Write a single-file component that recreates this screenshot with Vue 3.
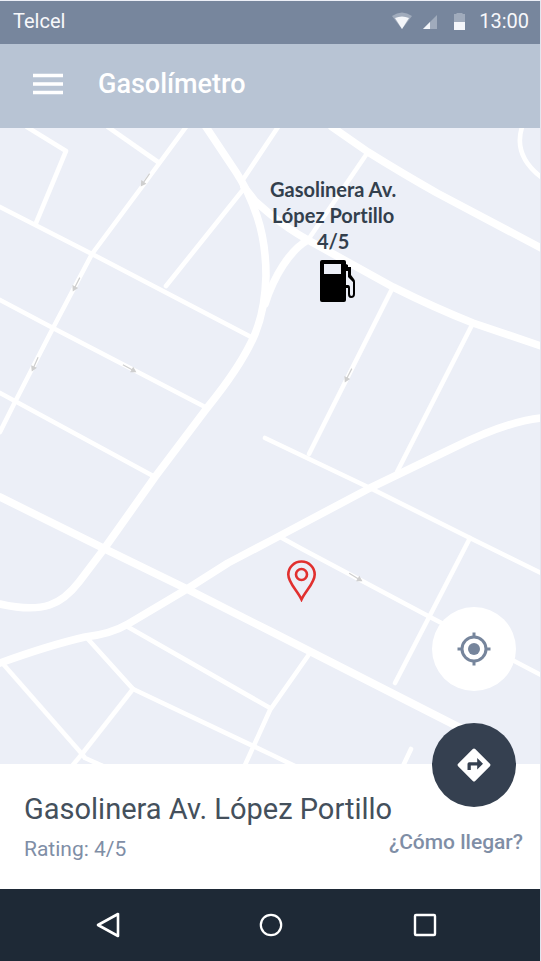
<script setup>
import { ref } from 'vue'

const station = ref({ name: 'Gasolinera Av. López Portillo', rating: '4/5' })

const avenues = [
  'M206 127L236 172Q248 190 257 216Q266 243 266 276Q265 310 255 334Q242 365 207 408L155 477L104 549L79 582C62 604 44 614 0 604',
  'M244 187L255 201L270 214Q288 229 308 240L393 287Q435 308 473 323L541 346',
  'M332 127L368 152Q400 172 437 193L541 248',
  'M308 240C290 250 274 276 265 304',
  'M541 418Q508 421 453 448L370 488L270 541L228 563L187 589L128 624Q111 634 85 637Q50 645 0 663',
  'M0 497L105 549L187 589L270 631L490 743',
]

const streets = [
  'M27 127L66 151L36 223',
  'M108 127L158 162',
  'M186 127L144 184L92 254L53 328L15 402L0 432',
  'M0 207L92 254L253 338',
  'M166 286L242 191M242 181L278 127',
  'M368 152L310 237',
  'M522 127C516 146 523 163 541 177',
  'M393 287L309 454',
  'M473 323L397 472',
  'M265 438L370 488L470 538L541 573',
  'M0 393L155 477',
  'M0 300L53 328L207 408',
  'M282 538L302 549L430 617L541 675',
  'M470 538L395 683',
  'M128 627L270 708',
  'M310 653L270 710L245 765',
  'M87 638L133 689L270 754L295 766',
  'M133 689L82 754L72 766',
  'M4 665L82 754L85 758L103 766',
  'M411 749L403 766',
]

const directions = [
  { x: 141, y: 186, angle: 125 },
  { x: 73, y: 291, angle: 117 },
  { x: 32, y: 371, angle: 114 },
  { x: 136, y: 372, angle: 29 },
  { x: 345, y: 382, angle: 117 },
  { x: 362, y: 581, angle: 31 },
]
</script>

<template>
  <div class="screen">
    <div class="status">
      <span>Telcel</span>
      <div class="status-icons">
        <svg class="wifi" width="20" height="18" viewBox="0 0 20 18" aria-hidden="true">
          <path d="M0 4Q10-3 20 4L10 17Z" fill="#a0abbc" />
          <path d="M3 6Q10 3 17 6L10 17Z" fill="#f4f6fa" />
        </svg>
        <svg class="signal" width="14" height="18" viewBox="0 0 14 18" aria-hidden="true">
          <path d="M0 17L14 3V17Z" fill="#a0abbc" />
          <path d="M0 17L7 10V17Z" fill="#f4f6fa" />
        </svg>
        <svg class="battery" width="11" height="18" viewBox="0 0 11 18" aria-hidden="true">
          <path d="M0 2H2L3 1H8L9 2H11V10H0Z" fill="#a0abbc" />
          <path d="M0 10H11V18H0Z" fill="#f4f6fa" />
        </svg>
        <span>13:00</span>
      </div>
    </div>

    <header class="appbar">
      <button class="menu" type="button" aria-label="Menú">
        <svg width="30" height="22" viewBox="0 0 30 22" aria-hidden="true">
          <path d="M0 2.5H30M0 11H30M0 19.5H30" stroke="#fff" stroke-width="3.6" />
        </svg>
      </button>
      <h1>Gasolímetro</h1>
    </header>

    <main class="map">
      <svg class="roads" viewBox="0 128 540 636" preserveAspectRatio="xMidYMid slice" aria-hidden="true">
        <g fill="none" stroke="#fff" stroke-linecap="round" stroke-linejoin="round">
          <path v-for="d in streets" :key="d" :d="d" stroke-width="4.6" />
          <path v-for="d in avenues" :key="d" :d="d" stroke-width="7.6" />
        </g>
        <g
          v-for="a in directions"
          :key="a.x + '-' + a.y"
          :transform="`translate(${a.x} ${a.y}) rotate(${a.angle})`"
          fill="#cfcfcf"
        >
          <path d="M-15-.6H-5V-3.2L.5 0L-5 3.2V.6H-15Z" />
        </g>
      </svg>

      <div class="station">
        <p>Gasolinera Av.<br />López Portillo<br />{{ station.rating }}</p>
        <svg width="36" height="42" viewBox="0 0 36 42" aria-hidden="true">
          <path
            fill-rule="evenodd"
            d="M2 0H24Q26 0 26 2V4L28 5V7H31V15L34 19Q35 20 35 22V34Q35 38 31 38Q28 38 28 34V28H26V40Q26 42 24 42H2Q0 42 0 40V2Q0 0 2 0ZM4 4H21V14H4ZM26 11V25H28Q30 25 30 28V34Q30 36 31.5 36Q33 36 33 34V22L28 17V11Z"
          />
        </svg>
      </div>

      <svg class="pin" width="30" height="42" viewBox="0 0 30 42" role="img" aria-label="Tu ubicación">
        <g fill="none" stroke="#e1302f" stroke-width="2.6">
          <path d="M14.5 39.5C10 30 1.3 23 1.3 14.5A13.2 13 0 0 1 27.7 14.5C27.7 23 19 30 14.5 39.5Z" />
          <circle cx="14.5" cy="14.5" r="5.5" />
        </g>
      </svg>

      <button class="fab locate" type="button" aria-label="Mi ubicación">
        <svg width="34" height="34" viewBox="0 0 34 34" aria-hidden="true">
          <circle cx="17" cy="17" r="12" fill="none" stroke="#76859c" stroke-width="3" />
          <circle cx="17" cy="17" r="6" fill="#76859c" />
          <path d="M17 .5V5M17 29V33.5M.5 17H5M29 17H33.5" stroke="#76859c" stroke-width="3" />
        </svg>
      </button>
    </main>

    <section class="sheet">
      <div>
        <h2>{{ station.name }}</h2>
        <p class="rating">Rating: {{ station.rating }}</p>
      </div>
      <a class="route" href="#ruta">¿Cómo llegar?</a>
      <button class="fab directions" type="button" aria-label="Cómo llegar">
        <svg width="34" height="34" viewBox="0 0 34 34" aria-hidden="true">
          <path
            fill="#fff"
            fill-rule="evenodd"
            d="M15.8 1.1Q17 0 18.2 1.1L32.9 15.8Q34 17 32.9 18.2L18.2 32.9Q17 34 15.8 32.9L1.1 18.2Q0 17 1.1 15.8ZM20.2 10V14.2H12.2Q10.5 14.2 10.5 15.9V22H13.8V17.5H20.2V21.5L26 15.8Z"
          />
        </svg>
      </button>
    </section>

    <nav class="navbar">
      <button class="back" type="button" aria-label="Atrás">
        <svg width="26" height="26" viewBox="0 0 26 26" aria-hidden="true">
          <path d="M3 13L23 2V24Z" fill="none" stroke="#fff" stroke-width="2.6" stroke-linejoin="round" />
        </svg>
      </button>
      <button type="button" aria-label="Inicio">
        <svg width="26" height="26" viewBox="0 0 26 26" aria-hidden="true">
          <circle cx="13" cy="13" r="10.2" fill="none" stroke="#fff" stroke-width="2.2" />
        </svg>
      </button>
      <button type="button" aria-label="Recientes">
        <svg width="26" height="26" viewBox="0 0 26 26" aria-hidden="true">
          <rect x="3" y="3" width="20" height="20" rx="1" fill="none" stroke="#fff" stroke-width="2.4" />
        </svg>
      </button>
    </nav>
  </div>
</template>

<style>
body {
  margin: 0;
  background: #eceff7;
}
</style>

<style scoped>
.screen {
  box-sizing: border-box;
  display: flex;
  flex-direction: column;
  min-height: 100vh;
  border-top: 1px solid #eceff7;
  border-right: 1px solid #e3e6ef;
  font-family: Roboto, "Liberation Sans", sans-serif;
}

button {
  display: flex;
  align-items: center;
  justify-content: center;
  padding: 0;
  border: 0;
  background: none;
  cursor: pointer;
}

svg {
  display: block;
}

h1,
h2,
p {
  margin: 0;
}

.status {
  display: flex;
  align-items: center;
  justify-content: space-between;
  box-sizing: border-box;
  height: 43px;
  padding: 0 11px 3px 13px;
  background: #77869d;
  color: #f7f8fb;
  font-size: 20px;
  line-height: 24px;
}

.status-icons {
  display: flex;
  align-items: center;
}

.signal {
  margin-left: 11px;
}

.battery {
  margin: 0 14px 0 17px;
}

.appbar {
  display: flex;
  align-items: center;
  gap: 35px;
  box-sizing: border-box;
  height: 84px;
  padding: 0 33px 4px;
  background: #b8c4d4;
  color: #fff;
}

h1 {
  font-size: 27px;
  font-weight: 500;
  line-height: 32px;
}

.map {
  position: relative;
  flex: 1;
  min-height: 520px;
  background: #eceff7;
}

.roads {
  position: absolute;
  width: 100%;
  height: 100%;
}

.station {
  position: absolute;
  top: 48px;
  left: 270px;
  display: flex;
  flex-direction: column;
  align-items: center;
  gap: 6px;
  color: #333f4d;
  font-family: Lato, "Liberation Sans", sans-serif;
  font-size: 20px;
  font-variant-ligatures: none;
  font-weight: 700;
  line-height: 26px;
  text-align: center;
}

.station svg {
  margin-left: 10px;
  fill: #000;
}

.pin {
  position: absolute;
  top: 432px;
  left: 287px;
}

.fab {
  position: absolute;
  right: 24px;
  width: 84px;
  height: 84px;
  border-radius: 50%;
}

.locate {
  bottom: 73px;
  background: #fff;
}

.directions {
  top: -41px;
  background: #354050;
}

.sheet {
  position: relative;
  display: flex;
  justify-content: space-between;
  box-sizing: border-box;
  min-height: 125px;
  padding: 26px 17px 24px 24px;
  background: #fff;
}

h2 {
  color: #44505c;
  font-size: 29px;
  font-weight: 400;
  line-height: 38px;
  white-space: nowrap;
}

.rating {
  margin-top: 9px;
  color: #7f8ea6;
  font-size: 21px;
  line-height: 24px;
}

.route {
  position: absolute;
  top: 66px;
  right: 17px;
  color: #7f8ea6;
  font-size: 21px;
  font-weight: 500;
  line-height: 24px;
  text-decoration: none;
}

.navbar {
  display: flex;
  align-items: center;
  justify-content: space-between;
  box-sizing: border-box;
  height: 72px;
  padding: 0 102px 0 95px;
  background: #1e2936;
}

.back {
  padding-right: 8px;
}
</style>
